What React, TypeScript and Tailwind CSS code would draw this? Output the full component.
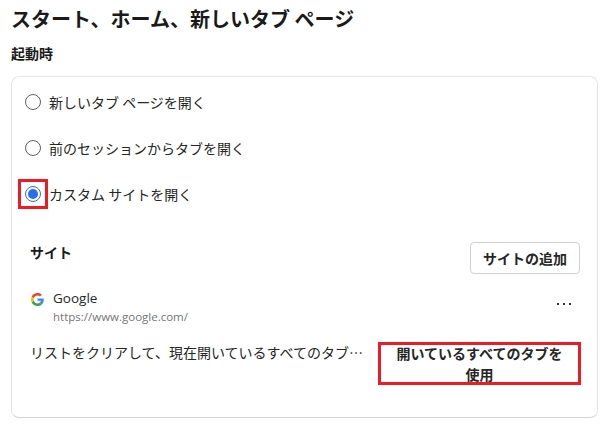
function Radio({ label, checked }: { label: string; checked?: boolean }) {
  return (
    <div className="flex h-[46px] items-center">
      <div className="relative flex h-4 w-4 items-center justify-center">
        {checked ? (
          <>
            <div className="flex h-4 w-4 items-center justify-center rounded-full border-[1.5px] border-[#2a6fe8]">
              <div className="h-[10px] w-[10px] rounded-full bg-[#2a6fe8]" />
            </div>
            <div className="absolute -left-[7px] -top-[7px] h-[30px] w-[30px] border-[3px] border-[#ed1c24]" />
          </>
        ) : (
          <div className="h-4 w-4 rounded-full border border-[#5f5f5f]" />
        )}
      </div>
      <span className="ml-2 text-[14px] text-[#262626]">{label}</span>
    </div>
  );
}

function GoogleIcon() {
  return (
    <svg viewBox="0 0 48 48" className="h-[13px] w-[13px]">
      <path fill="#EA4335" d="M24 9.5c3.5 0 6.7 1.2 9.2 3.6l6.9-6.9C35.9 2.4 30.5 0 24 0 14.6 0 6.5 5.4 2.6 13.2l8 6.2C12.5 13.7 17.8 9.5 24 9.5z" />
      <path fill="#4285F4" d="M47 24.5c0-1.6-.1-3.100-.4-4.500H24v9h12.900c-.6 3-2.200 5.500-4.700 7.200l7.700 6c4.500-4.200 7.100-10.300 7.100-17.700z" />
      <path fill="#FBBC05" d="M10.600 28.600c-.5-1.400-.8-3-.8-4.600s.3-3.200.8-4.600l-8-6.200C.9 16.500 0 20.100 0 24s.9 7.500 2.600 10.800l8-6.200z" />
      <path fill="#34A853" d="M24 48c6.500 0 11.900-2.100 15.900-5.800l-7.700-6c-2.200 1.400-4.900 2.300-8.200 2.300-6.200 0-11.500-4.200-13.400-9.900l-8 6.200C6.500 42.600 14.600 48 24 48z" />
    </svg>
  );
}

export default function App() {
  return (
    <main
      className="h-[433px] w-[609px] overflow-hidden bg-white px-[11px] pt-[5px]"
      style={{ fontFamily: '"Noto Sans CJK JP", "Open Sans", sans-serif' }}
    >
      <h1 className="text-[20px] leading-[28px] font-bold text-[#1a1a1a]">
        スタート、ホーム、新しいタブ ページ
      </h1>
      <h2 className="mt-[10px] text-[14px] leading-[20px] font-semibold text-[#1a1a1a]">起動時</h2>

      <section className="mt-[13px] h-[342px] w-[587px] rounded-lg border border-[#e6e6e6] border-b-[#d4d4d4] pl-[13px] pr-[17px] pt-[2px]">
        <Radio label="新しいタブ ページを開く" />
        <Radio label="前のセッションからタブを開く" />
        <Radio label="カスタム サイトを開く" checked />

        <div className="pl-[5px]">
          <div className="mt-[25px] flex h-8 items-center justify-between">
            <span className="-mt-[12px] text-[14px] font-bold text-[#1a1a1a]">サイト</span>
            <button className="h-8 w-[110px] rounded border border-[#d1d1d1] text-[14px] font-semibold text-[#262626]">
              サイトの追加
            </button>
          </div>

          <div className="mt-[14px] flex items-start">
            <div className="mt-[5px] ml-[1px]">
              <GoogleIcon />
            </div>
            <div className="ml-[9px] flex-1">
              <div className="text-[13.5px] leading-[20px] text-[#262626]" style={{ fontFamily: '"Open Sans", sans-serif' }}>
                Google
              </div>
              <div className="text-[11.5px] leading-[18px] text-[#767676]" style={{ fontFamily: '"Open Sans", sans-serif' }}>
                https://www.google.com/
              </div>
            </div>
            <div className="mr-[9px] mt-[15px] flex gap-[4px]">
              <span className="h-[2px] w-[2px] bg-[#333]" />
              <span className="h-[2px] w-[2px] bg-[#333]" />
              <span className="h-[2px] w-[2px] bg-[#333]" />
            </div>
          </div>

          <div className="mt-[16px] flex items-start justify-between">
            <p className="w-[337px] truncate text-[14px] leading-[21px] text-[#262626]">
              リストをクリアして、現在開いているすべてのタブを使用します
            </p>
            <div className="relative -mr-[1px] flex h-[43px] w-[203px] items-center justify-center border-[3px] border-[#ed1c24]">
              <span className="w-[180px] text-center text-[14px] leading-[21px] font-semibold text-[#262626]">
                開いているすべてのタブを使用
              </span>
            </div>
          </div>
        </div>
      </section>
    </main>
  );
}
